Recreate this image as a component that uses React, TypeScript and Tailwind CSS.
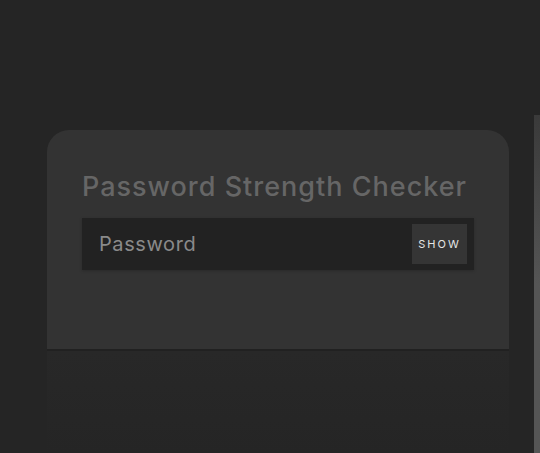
import React from "react";

export default function App() {
  return (
    <div
      className="relative h-[453px] w-[540px] overflow-hidden bg-[#252525]"
      style={{ fontFamily: "Inter, 'Noto Sans', sans-serif" }}
    >
      <div className="absolute right-0 top-[115px] h-[338px] w-[6px] bg-gradient-to-b from-[#3a3a3a] via-[#555] to-[#555]" />
      <div className="ml-[47px] w-[462px] pt-[130px]">
        <div className="h-[219px] rounded-t-[22px] bg-[#333] px-[35px] pt-[39px]">
          <h1 className="whitespace-nowrap text-[27px] font-medium leading-[35px] tracking-[1px] text-[#666]">
            Password Strength Checker
          </h1>
          <div className="mt-[14px] flex h-[52px] items-center bg-[#222] pl-[17px] pr-[7px] shadow-[0_1px_3px_rgba(0,0,0,0.2)]">
            <span className="flex-1 text-[20px] tracking-[0.6px] text-[#8a8a8a]">Password</span>
            <button className="flex h-[40px] w-[55px] items-center justify-center bg-[#353535] text-[11px] tracking-[2px] text-[#e5e5e5]">
              SHOW
            </button>
          </div>
        </div>
        <div className="h-[2px] bg-[#212121]" />
        <div className="h-[102px] bg-gradient-to-b from-[#282828] to-[#252525]" />
      </div>
    </div>
  );
}
